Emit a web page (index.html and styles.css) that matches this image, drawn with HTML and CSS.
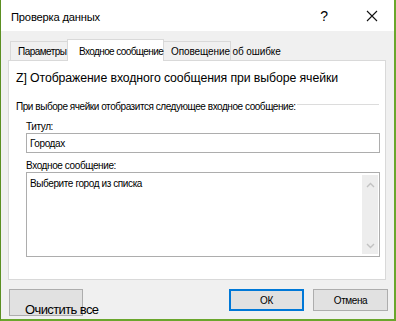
FILE: index.html
```html
<!DOCTYPE html>
<html lang="ru">
<head>
<meta charset="utf-8">
<title>Проверка данных</title>
<link rel="stylesheet" href="styles.css">
</head>
<body>
<div class="window">
  <div class="titlebar">
    <span class="title">Проверка данных</span>
    <span class="help">?</span>
    <svg class="close" width="12" height="12" viewBox="0 0 12 12"><path d="M1 1 L11 11 M11 1 L1 11" stroke="#111" stroke-width="1.1" fill="none"/></svg>
  </div>
  <div class="body">
    <div class="tabs">
      <div class="tab t1">Параметры</div>
      <div class="tab t2 active">Входное сообщение</div>
      <div class="tab t3">Оповещение об ошибке</div>
    </div>
    <div class="panel">
      <div class="heading">Z] Отображение входного сообщения при выборе ячейки</div>
      <div class="group"><span class="group-label">При выборе ячейки отобразится следующее входное сообщение:</span><span class="group-line"></span></div>
      <div class="field-label lbl-title">Титул:</div>
      <div class="input">Городах</div>
      <div class="field-label lbl-msg">Входное сообщение:</div>
      <div class="textarea">
        <div class="ta-text">Выберите город из списка</div>
        <div class="scrollbar">
          <svg width="9" height="6" viewBox="0 0 9 6"><path d="M1 5 L4.5 1.5 L8 5" stroke="#c2c2c2" stroke-width="1.4" fill="none"/></svg>
          <svg width="9" height="6" viewBox="0 0 9 6"><path d="M1 1 L4.5 4.5 L8 1" stroke="#c2c2c2" stroke-width="1.4" fill="none"/></svg>
        </div>
      </div>
    </div>
    <div class="buttons">
      <div class="btn clear"><span>Очистить все</span></div>
      <div class="spacer"></div>
      <div class="btn ok">ОК</div>
      <div class="btn cancel">Отмена</div>
    </div>
  </div>
</div>
</body>
</html>
```
FILE: styles.css
```css
html, body { margin: 0; padding: 0; }
body {
  font-family: "Liberation Sans", Arial, sans-serif;
  color: #000;
  background: #f0f0f0;
}
.window {
  width: 396px;
  height: 321px;
  box-sizing: border-box;
  border-left: 1px solid #5b8f22;
  border-right: 2px solid #6aa62c;
  border-bottom: 2px solid #6aa62c;
  background: #f0f0f0;
  display: flex;
  flex-direction: column;
  overflow: hidden;
}
.titlebar {
  height: 31px;
  flex: none;
  background: #fff;
  display: flex;
  align-items: center;
  padding-left: 10px;
}
.title { font-size: 11.2px; letter-spacing: -0.2px; margin-top: 3px; }
.help {
  font-size: 14px;
  margin-left: auto;
  margin-right: 38px;
}
.close { margin-right: 16px; }
.body {
  flex: 1;
  padding: 8px 0 0 7px;
  display: flex;
  flex-direction: column;
}
.tabs {
  display: flex;
  align-items: flex-end;
  height: 21px;
  padding-left: 2px;
  position: relative;
  z-index: 2;
}
.tab {
  box-sizing: border-box;
  height: 19px;
  border: 1px solid #d9d9d9;
  border-bottom: none;
  font-size: 10px;
  white-space: nowrap;
  padding-top: 4px;
  background: #f0f0f0;
}
.t1 { width: 57px; padding-left: 7px; border-right: none; letter-spacing: -0.55px; }
.t2 { width: 97px; padding-left: 11px; letter-spacing: -0.6px; }
.t3 { width: 67px; padding-left: 7px; border-left: none; letter-spacing: -0.1px; }
.tab.active {
  height: 22px;
  background: #fff;
  margin-bottom: -1px;
  padding-top: 6px;
}
.panel {
  box-sizing: border-box;
  width: 378px;
  height: 220px;
  background: #fff;
  border: 1px solid #d9d9d9;
  padding: 9px 0 0 7px;
  position: relative;
  z-index: 1;
}
.heading {
  font-size: 12.3px;
  line-height: 16px;
  letter-spacing: -0.1px;
}
.group {
  display: flex;
  align-items: center;
  margin-top: 12px;
  height: 13px;
  width: 363px;
}
.group-label { font-size: 10px; letter-spacing: -0.45px; white-space: nowrap; margin-top: 3px; }
.group-line {
  flex: 1;
  height: 1px;
  background: #dcdcdc;
  margin-left: 1px;
}
.field-label {
  font-size: 10px;
  letter-spacing: -0.4px;
  line-height: 13px;
  margin-left: 10px;
}
.lbl-title { margin-top: 9px; }
.input {
  box-sizing: border-box;
  margin: 0 0 0 10px;
  width: 354px;
  height: 20px;
  border: 1px solid #adadad;
  font-size: 10px;
  letter-spacing: -0.4px;
  padding: 4px 0 0 3px;
}
.lbl-msg { margin-top: 6px; }
.textarea {
  box-sizing: border-box;
  margin: 0 0 0 10px;
  width: 354px;
  height: 85px;
  border: 1px solid #adadad;
  display: flex;
  padding: 2px 1px 2px 3px;
}
.ta-text {
  flex: 1;
  font-size: 10px;
  letter-spacing: -0.4px;
  padding-top: 3px;
}
.scrollbar {
  width: 16px;
  background: #ededed;
  display: flex;
  flex-direction: column;
  align-items: center;
  justify-content: space-between;
  padding: 7px 0 5px;
  box-sizing: border-box;
}
.buttons {
  display: flex;
  align-items: flex-start;
  margin-top: 9px;
  padding-left: 1px;
  padding-right: 6px;
}
.btn {
  box-sizing: border-box;
  background: #e1e1e1;
  border: 1px solid #adadad;
  height: 22px;
  width: 75px;
  font-size: 10px;
  letter-spacing: -0.4px;
  display: flex;
  align-items: center;
  justify-content: center;
}
.clear {
  width: 74px;
  height: 27px;
  justify-content: flex-start;
  align-items: flex-start;
  white-space: nowrap;
  font-size: 13px;
  letter-spacing: -0.6px;
}
.clear span { margin: 12px 0 0 15px; }
.spacer { flex: 1; }
.ok { border: 2px solid #0078d7; margin-right: 9px; }
```
